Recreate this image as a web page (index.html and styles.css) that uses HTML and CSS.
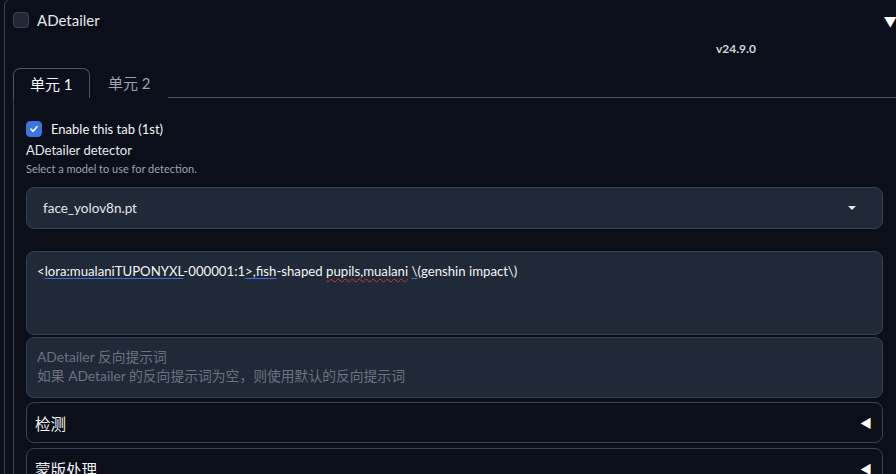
FILE: index.html
```html
<!DOCTYPE html>
<html>

	<head>
		<meta charset="UTF-8">
		<title>ADetailer</title>
		<link rel="stylesheet" href="styles.css">
	</head>

	<body>
		<div class="accordion">
			<div class="acc-head">
				<span class="box"></span>
				<span class="acc-title">ADetailer</span>
				<span class="acc-arrow">▼</span>
			</div>
			<div class="version">v24.9.0</div>

			<div class="tabs">
				<div class="tab-nav">
					<div class="tab selected">单元 1</div>
					<div class="tab">单元 2</div>
					<div class="tab-line"></div>
				</div>
				<div class="tab-panel">
					<div class="column">
						<label class="check-row">
							<span class="box checked">
								<svg width="10" height="10" viewBox="0 0 10 10"><path d="M2 5.2 L4.2 7.3 L8 2.8" fill="none" stroke="#fff" stroke-width="1.6" stroke-linecap="round" stroke-linejoin="round"/></svg>
							</span>
							<span>Enable this tab (1st)</span>
						</label>
						<div class="field-label">ADetailer detector</div>
						<div class="field-info">Select a model to use for detection.</div>
						<div class="dropdown">
							<span>face_yolov8n.pt</span>
							<span class="caret"></span>
						</div>

						<div class="prompt">&lt;<span class="spell-b">lora:mualaniTUPONYXL</span>-000001:1<span class="spell-b">&gt;,fish</span>-shaped <span class="spell-r">pupils,mualani</span> <span class="spell-b">\</span>(genshin impact\)</div>
						<div class="neg-prompt">
							<div>ADetailer 反向提示词</div>
							<div>如果 ADetailer 的反向提示词为空，则使用默认的反向提示词</div>
						</div>

						<div class="sub-acc">
							<span>检测</span>
							<span class="sub-arrow">◀</span>
						</div>
						<div class="sub-acc">
							<span>蒙版处理</span>
							<span class="sub-arrow">◀</span>
						</div>
					</div>
				</div>
			</div>
		</div>
	</body>

</html>
```

FILE: styles.css
```css
body {
	margin: 0;
	background: #0b0f19;
	color: #e5e7eb;
	font-family: Lato, "Noto Sans CJK SC", sans-serif;
	overflow: hidden;
}

.accordion {
	width: 900px;
	margin: -2px 0 0 4px;
	border: 1px solid #374151;
	border-radius: 8px;
	padding: 0 0 0 8px;
}

.acc-head {
	display: flex;
	align-items: center;
	height: 38px;
	padding-top: 2px;
}

.box {
	display: inline-flex;
	align-items: center;
	justify-content: center;
	width: 14px;
	height: 14px;
	border: 1px solid #374151;
	border-radius: 4px;
	background: #1f2937;
	flex-shrink: 0;
}

.acc-title {
	margin-left: 8px;
	font-size: 15px;
}

.acc-arrow {
	margin-left: 784px;
	font-size: 13px;
	color: #fff;
}

.version {
	margin-left: 703px;
	font-size: 12px;
	font-weight: bold;
	color: #d1d5db;
	height: 28px;
	line-height: 20px;
}

.tab-nav {
	display: flex;
	align-items: flex-end;
	height: 31px;
}

.tab {
	height: 30px;
	line-height: 31px;
	font-size: 15px;
	color: #9ca3af;
	padding: 0 16px 0 17px;
	border: 1px solid transparent;
	border-bottom: none;
	border-radius: 7px 7px 0 0;
}

.tab.selected {
	box-sizing: border-box;
	width: 77px;
	padding: 0 0 0 16px;
	color: #f3f4f6;
	border-color: #4b5563;
}

.tab-line {
	flex: 1;
	border-bottom: 1px solid #4b5563;
}

.tab-panel {
	border-left: 1px solid #374151;
	padding: 23px 0 0 12px;
}

.column {
	width: 857px;
}

.check-row {
	display: flex;
	align-items: center;
	font-size: 13px;
	height: 15px;
	color: #f3f4f6;
}

.box.checked {
	background: #3b76e0;
	border-color: #3b76e0;
	margin-right: 9px;
}

.field-label {
	margin-top: 6px;
	font-size: 13px;
	line-height: 16px;
}

.field-info {
	margin-top: 4px;
	font-size: 11px;
	line-height: 14px;
	color: #9ca3af;
}

.dropdown,
.prompt,
.neg-prompt {
	background: #1f2937;
	border: 1px solid #374151;
	border-radius: 8px;
	box-sizing: border-box;
}

.dropdown {
	display: flex;
	align-items: center;
	justify-content: space-between;
	margin-top: 11px;
	height: 42px;
	padding: 0 26px 0 16px;
	font-size: 13.5px;
}

.caret {
	width: 0;
	height: 0;
	border-left: 4px solid transparent;
	border-right: 4px solid transparent;
	border-top: 4px solid #e5e7eb;
}

.prompt {
	margin-top: 22px;
	height: 84px;
	padding: 10px 10px;
	font-size: 13.2px;
	line-height: 18px;
	color: #f3f4f6;
}

.spell-b {
	text-decoration: underline;
	text-decoration-color: #3b6fd8;
	text-underline-offset: 2px;
}

.spell-r {
	text-decoration: underline wavy;
	text-decoration-color: #d13438;
	text-decoration-thickness: 1px;
	text-underline-offset: 2px;
}

.neg-prompt {
	margin-top: 2px;
	height: 61px;
	padding: 9px 10px;
	font-size: 13.8px;
	line-height: 19px;
	color: #6b7280;
}

.sub-acc {
	display: flex;
	align-items: center;
	justify-content: space-between;
	margin-top: 4px;
	height: 41px;
	box-sizing: border-box;
	border: 1px solid #374151;
	border-radius: 8px;
	padding: 0 10px 0 8px;
	font-size: 15.5px;
	color: #f3f4f6;
}

.sub-acc + .sub-acc {
	margin-top: 5px;
}

.sub-arrow {
	font-size: 12px;
	color: #fff;
}
```
